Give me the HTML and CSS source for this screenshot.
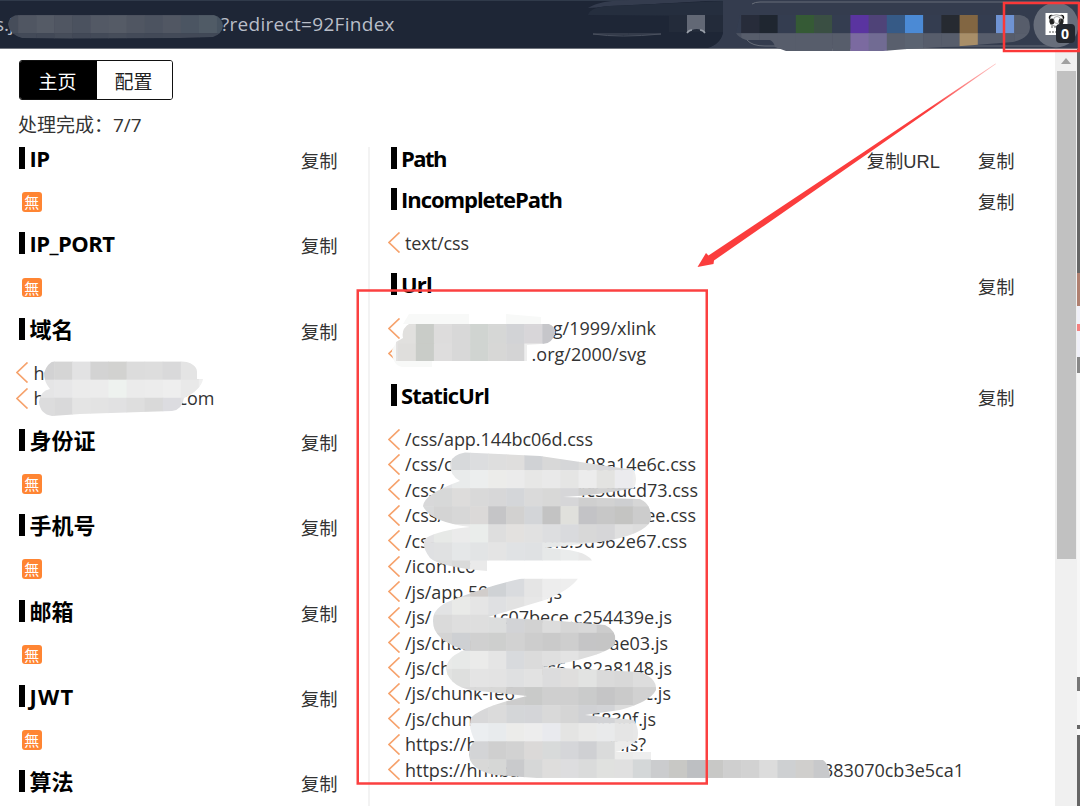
FILE: index.html
```html
<!DOCTYPE html>
<html lang="zh">
<head>
<meta charset="utf-8">
<title>主页</title>
<link rel="stylesheet" href="styles.css">
</head>
<body>
<div class="screen">
  <header class="toolbar">
    <div class="address"><span class="addr-start">s.j</span><span class="addr-query">?redirect=92Findex</span></div>
  </header>
  <div class="body">
    <main class="popup">
      <nav class="tabs"><button class="tab active">主页</button><button class="tab">配置</button></nav>
      <p class="status">处理完成：7/7</p>
      <div class="columns">
        <div class="col left" id="left"></div>
        <div class="col right" id="right"></div>
      </div>
    </main>
    <aside class="scrollbar"><i class="up"></i><i class="thumb"></i></aside>
    <aside class="behind"></aside>
  </div>
  <svg class="overlay" viewBox="0 0 1080 806" width="1080" height="806">
    <defs>
      <clipPath id="c-address"><path d="M8 24Q9 15 20 15H214Q223 18 223 26Q222 34 213 37L180 38L70 38.500L22 38Q9 34 8 24Z"/></clipPath>
      <clipPath id="c-tools"><path d="M736 33L740 15H1020Q1030 16 1030 27Q1030 38 1013 42L962 46L907 49L883 51H786L775 47Q774 42 770 40L746 40Q738 37 736 33Z"/></clipPath>
      <clipPath id="c-domain"><path d="M44 373Q47 363 55 360.500H180Q197 363 197 372V379H203Q201 390 184 398Q182 410 172 411L80 414L52 416Q40 414 39 402Q40 391 50 389Q44 382 44 373Z"/></clipPath>
      <clipPath id="c-url"><path d="M409 324H549Q556 327 555 333Q552 345 541 344L527 345V361H396V342L403 338Q401 329 409 324Z"/></clipPath>
      <clipPath id="c-static"><path d="M450 463Q452 455 465 452.500L540 456L634 470Q638 480 634 488Q600 495 563 497L640 499Q652 504 651 520Q645 535 600 542L545 548Q585 549 592 560.500H487V571Q440 567 430 558Q420 545 426 538Q440 530 470 527Q430 522 423 506Q424 494 460 481Q450 476 450 463ZM522 578.500H578Q570 590 545 600L488 617L560 621L605 625Q616 630 616 642Q612 655 543 667L640 672Q657 678 656 690Q650 702 620 710L585 715L634 720Q640 730 637 740Q625 750 615 752H651V760H823Q830 765 830 779H551L495 775Q470 770 469 755Q469 745 475 741Q468 728 471 718Q480 707 527 696L470 690Q448 685 446 668Q448 656 465 650Q432 640 433 620Q433 608 450 601Q490 585 522 578.500Z"/></clipPath>
      <linearGradient id="shaft" gradientUnits="userSpaceOnUse" x1="996" y1="64" x2="930" y2="109"><stop offset="0" stop-color="#fb3d3d" stop-opacity=".3"/><stop offset="1" stop-color="#fb3d3d"/></linearGradient>
    </defs>
    <path d="M588 8Q600 0 630 0H723V32Q721 44 707 48H1080V0H723" fill="#343c4e"/>
    <path d="M588 48V15Q590 7 610 6L723 1V32Q721 44 707 48Z" fill="#1e2636"/>
    <path d="M588 15Q590 7 610 6L723 1V16Z" fill="#252e3e"/>
    <path d="M669 15h54v17H669z" fill="#232b3a"/>
    <path d="M593 34Q620 38 661 34Q630 34 593 34Z" stroke="#4a515f" fill="none"/>
    <path d="M687 15h18v18l-4-3q-4-2-9 0l-5 3z" fill="#626875"/><path d="M687 33q2-3 5-3M705 33q-2-3-5-3" stroke="#9aa0aa" fill="none" stroke-width="1.500"/>
    <path d="M752 4Q755 2 760 2H1079M747 40Q752 46 765 46H1055" stroke="#676d78" fill="none"/>
    <path d="M707 48.500H1080" stroke="#70747d"/>
    <g id="mosaics"></g>
    <circle cx="1056" cy="25" r="22.500" fill="#686e7b"/>
    <g>
      <path d="M1045.500 13H1067.500V35H1045.500Z" fill="#fff"/>
      <circle cx="1051.500" cy="17.500" r="2.700" fill="#111"/><circle cx="1061.500" cy="17.500" r="2.700" fill="#111"/>
      <path d="M1051 16Q1056.500 13.500 1062 16Q1065 21 1062 25Q1057 28 1051 25Q1048 21 1051 16Z" fill="#fff" stroke="#777" stroke-width=".7"/>
      <ellipse cx="1052" cy="21.500" rx="2.400" ry="3" fill="#222"/><ellipse cx="1061" cy="21.500" rx="2.400" ry="3" fill="#222"/>
      <circle cx="1057" cy="20" r="3.500" fill="none" stroke="#777" stroke-width=".6"/>
      <path d="M1051 27h6M1049 32h8" stroke="#555" stroke-dasharray="2 1"/>
      <rect x="1056" y="24" width="19" height="19" rx="4" fill="#23262d"/>
      <text class="badge" x="1065" y="39" text-anchor="middle">0</text>
    </g>
    <path d="M996 64L866.500 154.500L714 260.500L713.500 264L697.500 267L706 253L708.500 255.500L864.500 151.500L995.500 63.500Z" fill="url(#shaft)"/>
    <path d="M1079 3H1004V51H1079Z" fill="none" stroke="#fb3838" stroke-width="2.500"/>
    <path d="M357.750 290.500H706.750V783.500H357.750Z" fill="none" stroke="#fb4040" stroke-width="2.500"/>
  </svg>
</div>
<script src="main.js"></script>
</body>
</html>
```
FILE: styles.css
```css
* { box-sizing: border-box; }
body { margin: 0; background: #fff; color: #333; font-family: "Open Sans", "Noto Sans CJK SC", sans-serif; }
button, p, h2, ul { margin: 0; padding: 0; }
.screen { position: relative; width: 1080px; height: 806px; overflow: hidden; display: flex; flex-direction: column; }
.toolbar { height: 49px; flex: none; background: #1e2636; border-top: 1px solid #303a4a; border-bottom: 1px solid #70747d; }
.address { display: flex; height: 46px; align-items: center; color: #b9bec8; font-size: 19px; white-space: nowrap; }
.addr-start { width: 221px; margin-left: -5px; }
.addr-query { margin-left: 5px; letter-spacing: 0.3px; }
.body { display: flex; flex: 1; min-height: 0; }
.popup { width: 1055px; padding: 11px 0 0 19px; flex: none; display: flex; flex-direction: column; }
.tabs { display: flex; width: 154px; height: 40px; flex: none; border: 1px solid #111; border-radius: 3px; overflow: hidden; }
.tab { flex: 1; border: 0; padding: 0 2px 0 0; background: #fff; color: #222; font: 19px/39px "Noto Sans CJK SC", sans-serif; }
.tab.active { background: #000; color: #fff; flex: none; width: 77px; }
.status { height: 47px; padding-top: 11px; margin-left: -1px; font-size: 19px; line-height: 29px; flex: none; white-space: nowrap; }
.columns { display: flex; flex: 1; min-height: 0; }
.col { flex: none; }
.left { width: 351px; border-right: 2px solid #f3f3f3; }
.right { width: 645px; padding-left: 20.5px; }
.head { display: flex; height: 40.75px; align-items: flex-start; }
.head h2 { flex: 1; height: 22px; border-left: 6px solid #000; padding-left: 4.5px; color: #000; font-size: 22px; line-height: 23px; font-weight: 700; }
.head h2 span { white-space: nowrap; display: inline-block; }
.item span { display: inline-block; white-space: nowrap; }
.head button { border: 0; background: none; color: #333; font: 18.3px/30px "Liberation Sans", "Noto Sans CJK SC", sans-serif; margin-left: 38px; white-space: nowrap; }
.left .head { width: 318.5px; }
.right .head { width: 624px; }
.list { list-style: none; padding: 1.6px 0 17.6px; }
.item { display: flex; height: 25.45px; align-items: center; font-size: 18px; line-height: 25px; margin-left: -3px; }
.item svg { width: 13px; height: 21px; flex: none; margin-right: 4.5px; }
.item path { fill: none; stroke: #f6a26c; stroke-width: 1.7; }
.line { display: flex; justify-content: space-between; flex: none; white-space: nowrap; padding-top: 1px; }
.none { width: 19.5px; height: 19.5px; margin: 3px 0 3px 3px; border-radius: 3px; background: #ff8533; color: #fff; font: 400 15px/19px "Noto Sans CJK JP", sans-serif; text-align: center; }
.scrollbar { width: 22px; background: #f0f0f0; flex: none; display: flex; flex-direction: column; align-items: center; }
.up { margin-top: 9px; border: 5px solid transparent; border-top: 0; border-bottom: 6px solid #a0a0a0; }
.thumb { width: 19px; height: 488px; margin-top: 7px; background: #c1c1c1; }
.behind { flex: 1; background: linear-gradient(#666 224px, #b08070 224px 257px, #f0f0f8 257px 275px, #f58080 275px 282px, #f0f0f8 282px 308px, #888 308px 324px, #f7f7f7 324px 628px, #777 628px 642px, #f7f7f7 642px 676px, #666 676px 680px, #f7f7f7 680px 686px, #666 686px); }
.overlay { position: absolute; left: 0; top: 0; pointer-events: none; }
.badge { fill: #fff; font: 700 14px "Open Sans", sans-serif; }
```
FILE: main.js
```js
const CHEVRON = '<svg viewBox="0 0 13 21"><path d="M11.500 0.500L1 10.500L11.500 20.500"/></svg>';

// title, title width, link labels, rows; null rows show the "none" mark
const left = [
  ['IP', 20, ['复制'], null],
  ['IP_PORT', 85, ['复制'], null],
  ['域名', 0, ['复制'], [['h', '', 170], ['h', '.com', 181]]],
  ['身份证', 0, ['复制'], null],
  ['手机号', 0, ['复制'], null],
  ['邮箱', 0, ['复制'], null],
  ['JWT', 45, ['复制'], null],
  ['算法', 0, ['复制'], []]
];
const right = [
  ['Path', 45, ['复制URL', '复制'], []],
  ['IncompletePath', 161, ['复制'], [['text/css', '', 64]]],
  ['Url', 31, ['复制'], [['', 'g/1999/xlink', 251], ['', '.org/2000/svg', 241]]],
  ['StaticUrl', 88, ['复制'], [
    ['/css/app.144bc06d.css', '', 188],
    ['/css/c', '98a14e6c.css', 291],
    ['/css/', '4c5ddcd73.css', 293],
    ['/css/', 'ee.css', 291],
    ['/css', 'bfs.9d962e67.css', 282],
    ['/icon.ico', '', 71],
    ['/js/app.591', '.js', 157],
    ['/js/', '1c07bece.c254439e.js', 267],
    ['/js/chunk-', 'ae03.js', 263],
    ['/js/ch', 'rs6.b82a8148.js', 267],
    ['/js/chunk-fe6', 'c.js', 266],
    ['/js/chun', '5830f.js', 251],
    ['https://h', 'n.js?', 241],
    ['https://hm.ba', '383070cb3e5ca1', 559]
  ]]
];

function build(id, sections) {
  document.getElementById(id).innerHTML = sections.map(([title, w, links, rows]) =>
    `<section><div class="head"><h2><span data-w="${w}">${title}</span></h2>${links.map(l => `<button>${l}</button>`).join('')}</div>` +
    (rows === null ? '<div class="list"><div class="none">無</div></div>' :
      rows.length ? `<ul class="list">${rows.map(([a, b, lw]) =>
        `<li class="item">${CHEVRON}<div class="line" style="width:${lw}px"><span ${b || lw === 170 ? '' : `data-w="${lw}"`}>${a}</span><span>${b}</span></div></li>`).join('')}</ul>` : '') +
    '</section>').join('');
}
build('left', left);
build('right', right);
document.querySelectorAll('[data-w]').forEach(el => {
  const w = +el.dataset.w;
  if (w) el.style.letterSpacing = (w - el.getBoundingClientRect().width) / el.textContent.length + 'px';
});

// mosaic strips: clip id -> [row, first column, colours]
const CELL = 18.08;
const mosaics = {
  'c-address': [[0, 0, '#444b59'], [1, 0, '#464d5a #505662 #555b66 #505662 #4b525f #535965 #555b66 #505662 #4c5360 #515763 #4b5562 #505b66 #475360'], [2, 0, '#414957 #434a58 #424957 #464d5a #424957 #434a58 #464d5a #434a58 #424957 #434a58 #424957 #414957 #414957']],
  'c-tools': [
    [1, 40, '#343d50 #272c3a #1f2630 #343d50 #355a35 #3a4f43 #343d50 #5a34a0 #4f4378 #365a86 #4b8ad5 #343d50 #262a31 #826642 #343d50 #6f93d3 #575d6b #575d6b'],
    [2, 40, '#4c5362 #575d6b #575d6b #575d6b #575d6b #575d6b #575d6b #7b6aa0 #716b93 #595f6d #5b6371 #575d6b #575d6b #a88e68 #575d6b #575d6b #595f6d #575d6b']],
  'c-domain': [
    [20, 2, '#d2d2d3 #d5d5d5 #e2e2e3 #d3d3d3 #d2d2d0 #dcdcdc #dddddd #d9d9da #e4e4e4 #eee'],
    [21, 2, '#e5e5e6 #e7e7e8 #ebebeb #ececec #eef2ef #ebebeb #ececec #eee #e9e9e9 #f0f0f0'],
    [22, 2, '#dcdcdd #d9d9da #e4e4e4 #e3e3e3 #e1e1e2 #dedede #d9d9d9 #dcdce0 #e3e3e4']],
  'c-url': [
    [18, 21, '#e4e3e2 #e1e0de #c9ccc8 #dddcdc #d8d8d8 #d0d4d1 #d6d7d6 #d2d3d6 #d8d6d9 #c6c6ca'],
    [17, 21, '#e4e3e2 #e1e0de #c9ccc8 #dddcdc #d8d8d8 #d0d4d1 #d6d7d6 #d2d3d6 #d8d6d9 #c6c6ca'],
    [19, 21, '#e4e3e2 #dfdedc #c9ccc8 #dedddd #d8d8d8 #d0d4d1 #d7d7d6 #d4d4d5 #eee']],
  'c-static': [
    [25, 23, '#e5e8e7 #dfdfdf #d7d9db #dcdddf #dedede #dfdedd #d0d2d5 #d8d8d8 #d5d6d8 #dcdcdc #d8d8dc #d8d8d8'],
    [26, 23, '#dce0e2 #e3e4e6 #e9ebeb #eceeee #ececea #ebebeb #e7e7e6 #e9e9e9 #e5e5e4 #ececec #e3e3e1 #ebebee #eee'],
    [27, 23, '#d8d8d9 #d7d8d8 #dddcdb #d9d9d9 #d7d7d8 #d4d6d9 #dadada #d8d8d7 #d6d6d8 #cfcfcf #d2d2d2 #cecfd1 #d6d6d6'],
    [28, 23, '#d8d9da #d4d4d4 #d7d7d7 #dbd9d8 #c5c5c7 #d2d1d0 #d3d5d8 #c3c3c3 #e0e0dc #c3c3c6 #c7c7c7 #c4c4c2 #ccc'],
    [29, 23, '#e2e2e4 #e7e9e7 #ebebeb #eaedeb #dedede #e3e1df #e1e1e1 #dddee0 #d9dadd #d8d8d8 #d6d6d8 #e0e0e0 #ddd'],
    [30, 23, '#dfe0e2 #e0e1e2 #e5e7e8 #e2e4e5 #e4e4e4 #e0e2e4 #dfe1e3 #e6e8e8 #eaecec #e8e8e8'],
    [31, 23, '#e5e5e5 #ddd #dadada #eaeaea'],
    [32, 23, '#e2e2e2 #e2e2e2 #d5d5d5 #d1cdcb #cfd2d5 #d9dbde #e5e5e5 #ededed #eee'],
    [33, 23, '#e2e5e5 #e2e3e4 #e9eae8 #e5e5e5 #dfe0e2 #e2e2e2 #e7e7e7 #eee'],
    [34, 23, '#dadcdd #dadada #dedede #dedede #dcdddd #d2d3d6 #d2d2d2 #dcdcdc #d6d6d6 #d8d8d8 #ccc'],
    [35, 23, '#d8d8d8 #d4d4d4 #ced0d3 #d0d0d0 #cecfce #d2d2d2 #cdcdcd #cacaca #cecece #c5c5c6 #c5c5c5'],
    [36, 23, '#eee #e9eae9 #e7e9e8 #ebebea #e5e5e5 #d8dadd #dbdbdb #dfdfdf #e3e3e3 #ddd #ddd'],
    [37, 23, '#e3e5e4 #e2e3e2 #dedfde #e4e4e4 #e3e3e3 #dfe0e1 #e2e2e2 #dcdcdd #dfdedd #e2e3e2 #dadada #d8d8d8 #ddd #ddd'],
    [38, 23, '#ddd #d8d8d8 #dadada #d9d9d9 #d8d8d7 #ccc #c9cac9 #cfcfcf #cfcfcf #cacbcb #c5c5c6 #cacaca #d1d1d1 #d1d1d1'],
    [39, 23, '#ddd #dadada #d6d6d7 #d8d8d9 #dbdbdb #d4d6d8 #d4d5d8 #d9d9d9 #d5d5d5 #d0d1d4 #d2d3d6 #ddd #ddd'],
    [40, 23, '#ddd #e5e5e5 #e9ebec #ebeef0 #e8ebed #ececea #ededed #e9eaee #e4e4e3 #e9e9e8 #e9eaeb #e5e5e5 #e7e7e7'],
    [41, 23, '#ddd #d5d5d5 #cfcfcf #d3d4d6 #cfcfcf #d2d2d2 #dbd9d8 #d8dada #d5d6d9 #cfd0d3 #dadbdb #ececeb #eee'],
    [42, 25, '#d3d3d6 #d8d8d7 #d6d7d6 #c9cacc #d6d7d7 #dedddc #dddddf #dadbdb #e0e1df #e0e0e0 #d4d7d8 #cbccce #c8c8c5 #bdbfc2 #c8c8c6 #cfcfcf #d2d2d2 #dcdcdc #ced0d2 #d0cfcd #c8c9cb #c8c9cb']]
};
const shades = '<path d="M403 324L409 314H469V324M506 324V314L541 317V324M396 361H432V367H402Q392 365 392 350L396 343Z" fill="#f8f9f8"/>';
document.getElementById('mosaics').innerHTML = shades + Object.entries(mosaics).map(([id, rows]) =>
  `<g clip-path="url(#${id})">` + rows.map(([r, c, colors]) =>
    colors.split(' ').map((f, i) =>
      `<rect x="${id === 'c-tools' ? 723 + i * 18.2 : (c + i) * CELL}" y="${id === 'c-tools' && r === 1 ? 15 : r * CELL - (r < 3 ? 3 : 0)}" width="18.6" height="18.6" fill="${f}"/>`).join('')).join('') + '</g>').join('');
```
